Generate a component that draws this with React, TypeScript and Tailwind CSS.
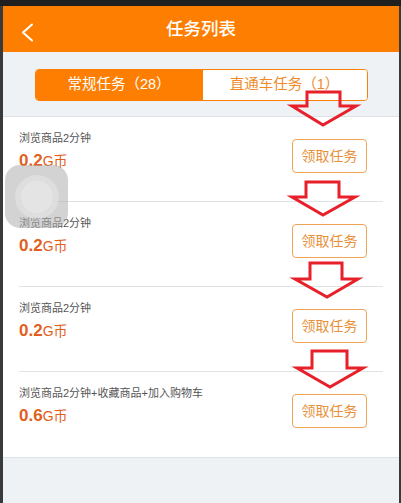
const tasks = [
  {title: '浏览商品2分钟', amount: '0.2'},
  {title: '浏览商品2分钟', amount: '0.2'},
  {title: '浏览商品2分钟', amount: '0.2'},
  {title: '浏览商品2分钟+收藏商品+加入购物车', amount: '0.6'},
];

// red hint arrows drawn over the list
const arrows = [
  '307,92 340,92 340,106 356,106 323,125 292,106 307,106',
  '306,182 339,182 339,197 355,197 323,215 292,197 306,197',
  '310,263 342,263 342,279 358,279 327,297 295,279 310,279',
  '312,351 347,351 347,368 363,368 330,387 297,368 312,368',
];

function TaskRow({title, amount, last}: {title: string; amount: string; last: boolean}) {
  return (
    <div
      className={`mx-4 h-[85px] flex justify-between pr-4 ${last ? '' : 'border-b border-[#dfe3e7]'}`}
    >
      <div className="flex flex-col pt-[13px]">
        <div className="text-[11px] leading-[16px] text-[#555]">{title}</div>
        <div className="mt-[3px] leading-[24px] text-[#e2601c]">
          <span className="text-[17px] font-bold">{amount}</span>
          <span className="text-[14px]">G币</span>
        </div>
      </div>
      <button className="mt-[22px] w-[75px] h-[34px] rounded-[4px] border border-[#f0a458] bg-white text-[14px] text-[#e8903a]">
        领取任务
      </button>
    </div>
  );
}

export default function App() {
  return (
    <div
      className="relative w-[401px] h-[503px] overflow-hidden bg-[#3a3a3a] pt-[6px] pl-[3px] pr-[2px]"
      style={{fontFamily: '"Liberation Sans", "Noto Sans CJK SC", sans-serif'}}
    >
      <div className="absolute left-0 top-0 w-full h-[6px] bg-[#202020]" />
      <div className="h-full flex flex-col bg-[#eef2f5]">
        {/* Header */}
        <header className="h-[46px] shrink-0 bg-[#fe7e02] flex items-center relative">
          <svg
            className="absolute left-[18px] top-[17px]"
            width="13"
            height="19"
            viewBox="0 0 13 19"
            fill="none"
          >
            <path d="M11 1.5 L2 9.5 L11 17.5" stroke="white" strokeWidth="2" strokeLinecap="round" strokeLinejoin="round" />
          </svg>
          <h1 className="flex-1 text-center text-white text-[17.5px] font-medium">任务列表</h1>
        </header>

        {/* Tabs */}
        <div className="pt-[17px] pb-[15px] flex justify-center">
          <div className="w-[333px] h-[32px] flex rounded-[4px] border border-[#fe7e02] overflow-hidden">
            <div className="w-[167px] bg-[#fe7e02] text-white text-[14.5px] flex items-center justify-center">
              常规任务（28）
            </div>
            <div className="flex-1 bg-white text-[#f08a2a] text-[14.5px] flex items-center justify-center">
              直通车任务（1）
            </div>
          </div>
        </div>

        {/* List */}
        <div className="bg-white border-y border-[#dde3e8]">
          {tasks.map((t, i) => (
            <TaskRow key={i} title={t.title} amount={t.amount} last={i === tasks.length - 1} />
          ))}
        </div>
      </div>

      <svg className="absolute left-0 top-0 pointer-events-none" width="401" height="503">
        {arrows.map((p, i) => (
          <polygon key={i} points={p} fill="none" stroke="#e8202a" strokeWidth="3" strokeLinejoin="miter" />
        ))}
      </svg>

      {/* floating assistive button */}
      <div className="absolute left-[5px] top-[165px] w-[63px] h-[63px] rounded-[15px] bg-[rgba(175,175,175,0.55)] flex items-center justify-center">
        <div className="w-[44px] h-[44px] rounded-full bg-[rgba(235,235,235,0.45)] flex items-center justify-center">
          <div className="w-[32px] h-[32px] rounded-full bg-[#e4e4e4]" />
        </div>
      </div>
    </div>
  );
}
